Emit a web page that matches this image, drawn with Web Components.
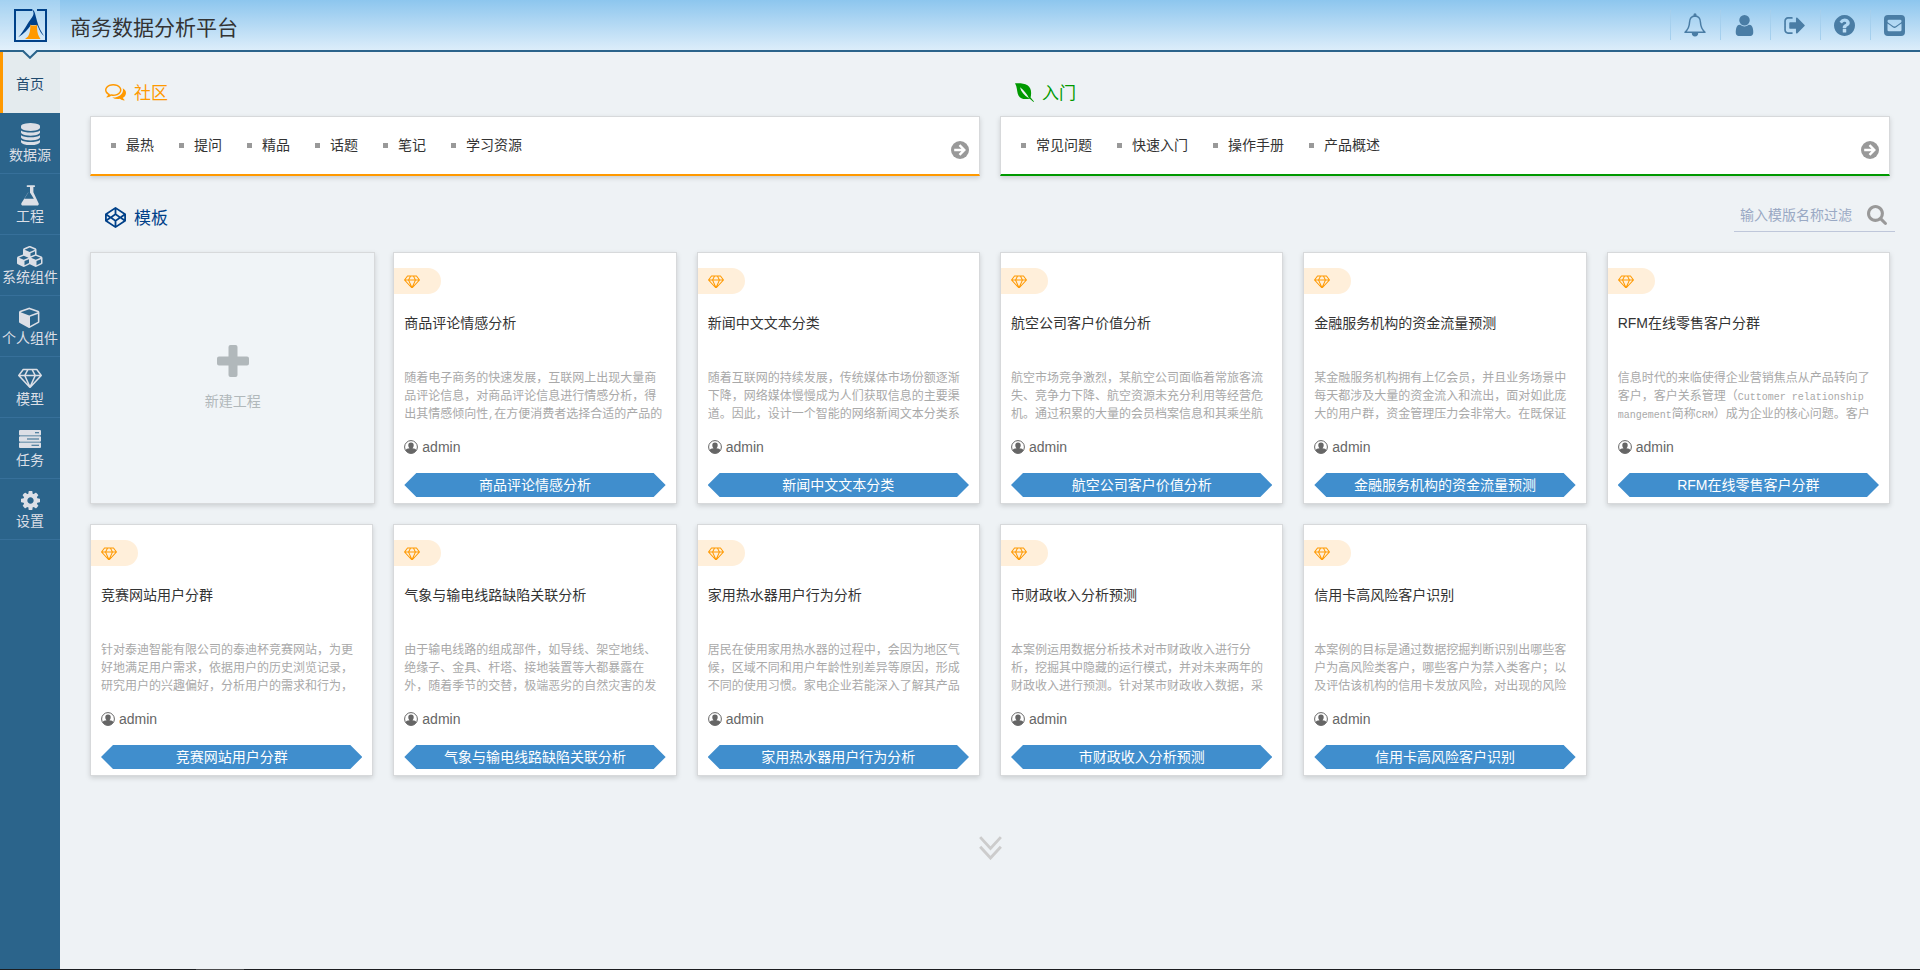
<!DOCTYPE html>
<html lang="zh-CN">
<head>
<meta charset="utf-8">
<title>商务数据分析平台</title>
<style>
  body {
    margin: 0;
    background: #eef2f5;
    color: #333;
    font: 14px/20px "Liberation Sans", "Noto Sans CJK SC", sans-serif;
  }
</style>
</head>
<body>
<app-shell>
  <app-header slot="header" heading="商务数据分析平台">
    <header-action icon="bell" label="消息"></header-action>
    <header-action icon="user" label="用户"></header-action>
    <header-action icon="signout" label="退出"></header-action>
    <header-action icon="question" label="帮助"></header-action>
    <header-action icon="envelope" label="反馈"></header-action>
  </app-header>

  <nav-item slot="nav" active>首页</nav-item>
  <nav-item slot="nav" icon="database">数据源</nav-item>
  <nav-item slot="nav" icon="flask">工程</nav-item>
  <nav-item slot="nav" icon="cubes">系统组件</nav-item>
  <nav-item slot="nav" icon="cube">个人组件</nav-item>
  <nav-item slot="nav" icon="diamond">模型</nav-item>
  <nav-item slot="nav" icon="tasks">任务</nav-item>
  <nav-item slot="nav" icon="cog">设置</nav-item>

  <link-panel slot="panels" icon="comments" heading="社区" style="--accent: #f90"
    links="最热,提问,精品,话题,笔记,学习资源"></link-panel>
  <link-panel slot="panels" icon="leaf" heading="入门" style="--accent: #090"
    links="常见问题,快速入门,操作手册,产品概述"></link-panel>

  <search-box slot="search" placeholder="输入模版名称过滤"></search-box>

  <new-card>新建工程</new-card>
  <template-card heading="商品评论情感分析" author="admin">随着电子商务的快速发展，互联网上出现大量商<br>品评论信息，对商品评论信息进行情感分析，得<br>出其情感倾向性<small>,</small>在方便消费者选择合适的产品的</template-card>
  <template-card heading="新闻中文文本分类" author="admin">随着互联网的持续发展，传统媒体市场份额逐渐<br>下降，网络媒体慢慢成为人们获取信息的主要渠<br>道。因此，设计一个智能的网络新闻文本分类系</template-card>
  <template-card heading="航空公司客户价值分析" author="admin">航空市场竞争激烈，某航空公司面临着常旅客流<br>失、竞争力下降、航空资源未充分利用等经营危<br>机。通过积累的大量的会员档案信息和其乘坐航</template-card>
  <template-card heading="金融服务机构的资金流量预测" author="admin">某金融服务机构拥有上亿会员，并且业务场景中<br>每天都涉及大量的资金流入和流出，面对如此庞<br>大的用户群，资金管理压力会非常大。在既保证</template-card>
  <template-card heading="RFM在线零售客户分群" author="admin">信息时代的来临使得企业营销焦点从产品转向了<br>客户，客户关系管理（<small>Cuttomer relationship</small><br><small>mangement</small>简称<small>CRM</small>）成为企业的核心问题。客户</template-card>
  <template-card heading="竞赛网站用户分群" author="admin">针对泰迪智能有限公司的泰迪杯竞赛网站，为更<br>好地满足用户需求，依据用户的历史浏览记录，<br>研究用户的兴趣偏好，分析用户的需求和行为，</template-card>
  <template-card heading="气象与输电线路缺陷关联分析" author="admin">由于输电线路的组成部件，如导线、架空地线、<br>绝缘子、金具、杆塔、接地装置等大都暴露在<br>外，随着季节的交替，极端恶劣的自然灾害的发</template-card>
  <template-card heading="家用热水器用户行为分析" author="admin">居民在使用家用热水器的过程中，会因为地区气<br>候，区域不同和用户年龄性别差异等原因，形成<br>不同的使用习惯。家电企业若能深入了解其产品</template-card>
  <template-card heading="市财政收入分析预测" author="admin">本案例运用数据分析技术对市财政收入进行分<br>析，挖掘其中隐藏的运行模式，并对未来两年的<br>财政收入进行预测。针对某市财政收入数据，采</template-card>
  <template-card heading="信用卡高风险客户识别" author="admin">本案例的目标是通过数据挖掘判断识别出哪些客<br>户为高风险类客户，哪些客户为禁入类客户；以<br>及评估该机构的信用卡发放风险，对出现的风险</template-card>
</app-shell>

<script>
// name: [viewBox, markup]
const icons = {
  bell: ['0 0 24 24', '<path fill="none" stroke="currentColor" stroke-width="1.500" stroke-linejoin="round" d="M12 3c-3.600.2-5.400 3-5.500 6.500C6.400 14 5 16.500 2 19.200h20c-3-2.700-4.400-5.200-4.500-9.700C17.400 6 15.600 3.200 12 3z"/><path d="M12 .2a1.500 1.500 0 0 1 1.500 1.600v1.700h-3V1.800A1.500 1.500 0 0 1 12 .2zM8.800 20h6.400a3.200 3.400 0 0 1-6.400 0z"/>'],
  user: ['128 128 1536 1536', '<path d="M1536 1399q0 109-62.500 187t-150.500 78h-854q-88 0-150.500-78t-62.500-187q0-85 8.500-160.500t31.500-152 58.500-131 94-89 134.500-34.500q131 128 313 128t313-128q76 0 134.500 34.500t94 89 58.500 131 31.500 152 8.500 160.500zm-256-887q0 159-112.500 271.500t-271.500 112.500-271.500-112.500-112.500-271.500 112.500-271.500 271.500-112.500 271.500 112.500 112.500 271.500z"/>'],
  signout: ['48 96 1600 1600', '<path d="M704 1440q0 4 1 20t.5 26.500-3 23.500-10 19.500-20.500 6.500h-320q-119 0-203.500-84.500t-84.500-203.500v-704q0-119 84.500-203.500t203.500-84.500h320q13 0 22.500 9.500t9.500 22.500q0 4 1 20t.5 26.500-3 23.500-10 19.500-20.500 6.500h-320q-66 0-113 47t-47 113v704q0 66 47 113t113 47h312l11.500 1 11.500 3 8 5.500 7 9 2 13.500zm928-544q0 26-19 45l-544 544q-19 19-45 19t-45-19-19-45v-288h-448q-26 0-45-19t-19-45v-384q0-26 19-45t45-19h448v-288q0-26 19-45t45-19 45 19l544 544q19 19 19 45z"/>'],
  question: ['128 128 1536 1536', '<path d="M1024 1376v-192q0-14-9-23t-23-9h-192q-14 0-23 9t-9 23v192q0 14 9 23t23 9h192q14 0 23-9t9-23zm256-672q0-88-55.500-163t-138.500-116-170-41q-243 0-371 213-15 24 8 42l132 100q7 6 19 6 16 0 25-12 53-68 86-92 34-24 86-24 48 0 85.500 26t37.500 59q0 38-20 61t-68 45q-63 28-115.500 86.500t-52.500 125.500v36q0 14 9 23t23 9h192q14 0 23-9t9-23q0-19 21.500-49.500t54.500-49.500q32-18 49-28.500t46-35 44.500-48 28-60.500 12.500-81zm384 192q0 209-103 385.500t-279.500 279.500-385.500 103-385.500-103-279.500-279.500-103-385.500 103-385.500 279.500-279.500 385.500-103 385.500 103 279.500 279.500 103 385.500z"/>'],
  envelope: ['0 0 24 24', '<path fill-rule="evenodd" d="M4.500 0h15A4.500 4.500 0 0 1 24 4.500v15a4.500 4.500 0 0 1-4.500 4.500h-15A4.500 4.500 0 0 1 0 19.500v-15A4.500 4.500 0 0 1 4.500 0zM4 9.700V17a1.500 1.500 0 0 0 1.500 1.500h13A1.500 1.500 0 0 0 20 17V9.700c-2 1.500-4 2.700-6 4.200-1.600 1.100-2.400 1.100-4 0-2-1.500-4-2.700-6-4.200zM5.500 5.500A1.500 1.500 0 0 0 4 7c0 .9.700 1.600 1.400 2.100l5.300 3.700c1 .6 1.600.6 2.600 0l5.300-3.700C19.300 8.600 20 7.900 20 7a1.500 1.500 0 0 0-1.500-1.500z"/>'],
  database: ['128 0 1536 1792', '<path d="M896 768q237 0 443-43t325-127v170q0 69-103 128t-280 93.500-385 34.500-385-34.500-280-93.500-103-128v-170q119 84 325 127t443 43zm0 768q237 0 443-43t325-127v170q0 69-103 128t-280 93.500-385 34.500-385-34.500-280-93.500-103-128v-170q119 84 325 127t443 43zm0-384q237 0 443-43t325-127v170q0 69-103 128t-280 93.500-385 34.500-385-34.500-280-93.500-103-128v-170q119 84 325 127t443 43zm0-1152q208 0 385 34.500t280 93.500 103 128v128q0 69-103 128t-280 93.500-385 34.500-385-34.500-280-93.500-103-128v-128q0-69 103-128t280-93.500 385-34.500z"/>'],
  flask: ['64 32 1664 1728', '<path d="M1527 1447q56 89 21.500 153t-140.500 64h-1024q-106 0-140.500-64t21.500-153l503-793v-399h-64q-26 0-45-19t-19-45 19-45 45-19h512q26 0 45 19t19 45-19 45-45 19h-64v399zm-779-725l-272 430h712l-272-430-20-31v-436h-128v436z"/>'],
  cubes: ['0 0 2304 1792', '<path d="M640 1632l384-192v-314l-384 164v342zm-64-454l404-173-404-173-404 173zm1088 454l384-192v-314l-384 164v342zm-64-454l404-173-404-173-404 173zm-448-293l384-165v-266l-384 164v267zm-64-379l441-189-441-189-441 189zm1088 518v416q0 36-19 67t-52 47l-448 224q-25 14-57 14t-57-14l-448-224q-4-2-7-4-2 2-7 4l-448 224q-25 14-57 14t-57-14l-448-224q-33-16-52-47t-19-67v-416q0-38 21.500-70t56.500-48l434-186v-400q0-38 21.500-70t56.500-48l448-192q23-10 50-10t50 10l448 192q35 16 56.500 48t21.500 70v400l434 186q36 16 57 48t21 70z"/>'],
  cube: ['0 0 1792 1792', '<path d="M896 1629l640-349v-636l-640 233v752zm-64-865l698-254-698-254-698 254zm832-252v768q0 35-18 65t-49 47l-704 384q-28 16-61 16t-61-16l-704-384q-31-17-49-47t-18-65v-768q0-40 23-73t61-47l704-256q22-8 44-8t44 8l704 256q38 14 61 47t23 73z"/>'],
  diamond: ['0 64 2048 1664', '<path d="M212 768l623 665-300-665h-323zm812 772l349-772h-698zm-486-900l204-384h-262l-288 384h346zm675 793l623-665h-323zm-530-793h682l-204-384h-274zm827 0h346l-288-384h-262zm141-486l384 512q14 18 13 41.500t-17 40.500l-960 1024q-18 20-47 20t-47-20l-960-1024q-16-17-17-40.500t13-41.500l384-512q18-26 51-26h1152q33 0 51 26z"/>'],
  tasks: ['0 0 22 18', '<path fill-rule="evenodd" d="M.7 0h20.600l.7.7v4l-.7.700H.7L0 4.700v-4zM16 2.200v1h4v-1zM.7 6.300h20.600l.7.700v4l-.7.700H.7L0 11V7zM8 8.500v1h12v-1zM.7 12.600h20.600l.7.700v4l-.7.700H.7l-.7-.7v-4zM12.500 14.800v1H20v-1z"/>'],
  cog: ['128 128 1536 1536', '<path d="M1152 896q0-106-75-181t-181-75-181 75-75 181 75 181 181 75 181-75 75-181zm512-109v222q0 12-8 23t-20 13l-185 28q-19 54-39 91 35 50 107 138 10 12 10 25t-9 23q-27 37-99 108t-94 71q-12 0-26-9l-138-108q-44 23-91 38-16 136-29 186-7 28-36 28h-222q-14 0-24.500-8.500t-11.500-21.500l-28-184q-49-16-90-37l-141 107q-10 9-25 9-14 0-25-11-126-114-165-168-7-10-7-23 0-12 8-23 15-21 51-66.500t54-70.500q-27-50-41-99l-183-27q-13-2-21-12.500t-8-23.500v-222q0-12 8-23t19-13l186-28q14-46 39-92-40-57-107-138-10-12-10-24 0-10 9-23 26-36 98.500-107.500t94.500-71.500q13 0 26 10l138 107q44-23 91-38 16-136 29-186 7-28 36-28h222q14 0 24.500 8.500t11.500 21.500l28 184q49 16 90 37l142-107q9-9 24-9 13 0 25 10 129 119 165 170 7 8 7 22 0 12-8 23-15 21-51 66.500t-54 70.500q26 50 41 98l183 28q13 2 21 12.500t8 23.500z"/>'],
  comments: ['0 256 1792 1408', '<path d="M704 384q-153 0-286 52t-211.500 141-78.500 191q0 82 53 158t149 132l97 56-35 84q34-20 62-39l44-31 53 10q78 14 153 14 153 0 286-52t211.500-141 78.500-191-78.500-191-211.500-141-286-52zm0-128q191 0 353.500 68.500t256.500 186.500 94 257-94 257-256.500 186.500-353.500 68.500q-86 0-176-16-124 88-278 128-36 9-86 16h-3q-11 0-20.500-8t-11.500-21q-1-3-1-6.500t.5-6.500 2-6l2.500-5 3.500-5.500 4-5 4.500-5 4-4.500q5-6 23-25t26-29.500 22.500-29 25-38.500 20.500-44q-124-72-195-177t-71-224q0-139 94-257t256.500-186.500 353.500-68.500zm822 1169q10 24 20.500 44t25 38.500 22.500 29 26 29.500 23 25q1 1 4 4.500t4.500 5 4 5 3.500 5.500l2.500 5 2 6 .5 6.500-1 6.500q-3 14-13 22t-22 7q-50-7-86-16-154-40-278-128-90 16-176 16-271 0-472-132 58 4 88 4 161 0 309-45t264-129q125-92 192-212t67-254q0-77-23-152 129 71 204 178t75 230q0 120-71 224.500t-195 176.500z"/>'],
  leaf: ['0 0 19 19', '<path fill-rule="evenodd" d="M0 .3C4 .1 9 0 12.500 2.300c3.500 2.400 4.300 6.600 3.100 12.200L19 18.600l-.5.400-3.700-3.300c-5.300.9-9.300.5-11.200-2.900C1.700 9.500 2.500 4.500 0 .3zm5 3.900c1 4.300 4 8.300 9 11-2.200-4.600-5.200-8-9-11z"/>'],
  codepen: ['0 0 1792 1792', '<path d="M216 1169l603 402v-359l-334-223zm-62-144l193-129-193-129v258zm819 546l603-402-269-180-334 223v359zm-77-493l272-182-272-182-272 182zm-411-275l334-223v-359l-603 402zm960 93l193 129v-258zm-138-93l269-180-603-402v359zm485-180v546q0 41-34 64l-819 546q-21 13-43 13t-43-13l-819-546q-34-23-34-64v-546q0-41 34-64l819-546q21-13 43-13t43 13l819 546q34 23 34 64z"/>'],
  arrow: ['0 0 18 18', '<circle cx="9" cy="9" r="9"/><path fill="none" stroke="#fff" stroke-width="2.400" d="M3.200 9h9.300M8.500 4.200L13.300 9l-4.800 4.800"/>'],
  search: ['64 128 1664 1664', '<path d="M1216 832q0-185-131.500-316.500t-316.500-131.500-316.500 131.500-131.500 316.500 131.500 316.500 316.500 131.500 316.500-131.500 131.500-316.500zm512 832q0 52-38 90t-90 38q-54 0-90-38l-343-342q-179 124-399 124-143 0-273.500-55.500t-225-150-150-225-55.500-273.500 55.500-273.500 150-225 225-150 273.500-55.500 273.500 55.500 225 150 150 225 55.500 273.500q0 220-124 399l343 343q37 37 37 90z"/>'],
  plus: ['0 0 32 32', '<path d="M13.500 0h5a2 2 0 0 1 2 2v9.500H30a2 2 0 0 1 2 2v5a2 2 0 0 1-2 2h-9.500V30a2 2 0 0 1-2 2h-5a2 2 0 0 1-2-2v-9.500H2a2 2 0 0 1-2-2v-5a2 2 0 0 1 2-2h9.500V2a2 2 0 0 1 2-2z"/>'],
  person: ['0 0 14 14', '<circle cx="7" cy="7" r="6.400" fill="none" stroke="currentColor"/><path d="M7 2.600a2.700 2.700 0 0 1 2.700 2.800c0 1.200-.5 2.200-1.300 2.800 2 .2 3.600.8 4.200 1.800A6.500 6.500 0 0 1 7 13.500 6.500 6.500 0 0 1 1.400 10c.6-1 2.200-1.600 4.200-1.800-.8-.6-1.300-1.600-1.300-2.800A2.700 2.700 0 0 1 7 2.600z"/>'],
  more: ['0 0 24 25', '<path fill="none" stroke="currentColor" stroke-width="3" d="M1.200 1.200L12 13 22.800 1.200M1.200 11.200L12 23l10.800-11.800"/>'],
};

class BaseElement extends HTMLElement {
  constructor() {
    super();
    this.attachShadow({ mode: 'open' });
  }

  connectedCallback() {
    this.shadowRoot.innerHTML = this.render();
  }

  attr(name) {
    return this.getAttribute(name) || '';
  }
}

// Sized by the --size (width) property, height follows the viewBox
class AppIcon extends BaseElement {
  render() {
    const [viewBox, markup] = icons[this.attr('name')];
    return `
      <style>
        :host { display: inline-flex; flex: none; width: var(--size, 20px); }
        svg { display: block; width: 100%; fill: currentColor; }
      </style>
      <svg viewBox="${viewBox}" aria-hidden="true">${markup}</svg>`;
  }
}

class AppShell extends BaseElement {
  render() {
    return `
      <style>
        :host {
          display: grid;
          grid-template: auto 1fr auto / 60px 1fr;
          min-height: 100vh;
        }
        header, footer { grid-column: 1 / -1; }
        nav { background: #2b648b; }
        main { padding: 0 30px 20px; }
        .panels {
          display: grid;
          grid-template-columns: 1fr 1fr;
          gap: 20px;
        }
        .bar {
          display: flex;
          align-items: center;
          box-sizing: border-box;
          height: 76px;
          margin-right: -5px;
          padding: 10px 0 0 15px;
        }
        h2 {
          display: flex;
          align-items: center;
          gap: 8px;
          flex: 1;
          margin: 0;
          color: #004189;
          font-size: 17px;
          font-weight: normal;
        }
        app-icon { --size: 21px; }
        h2 app-icon { margin-bottom: 3px; }
        .cards {
          display: grid;
          grid-template-columns: repeat(6, minmax(0, 1fr));
          gap: 20px;
        }
        .more {
          display: block;
          margin: 60px auto 0;
          padding: 0;
          border: 0;
          background: none;
          color: #ccc;
          cursor: pointer;
        }
        .more app-icon { --size: 23px; }
        footer {
          height: 1px;
          background: linear-gradient(90deg, #1b1d20 196px, #4a4b4d 196px 244px, #1b1d20 244px);
        }
      </style>
      <header><slot name="header"></slot></header>
      <nav><slot name="nav"></slot></nav>
      <main>
        <div class="panels"><slot name="panels"></slot></div>
        <div class="bar">
          <h2><app-icon name="codepen"></app-icon>模板</h2>
          <slot name="search"></slot>
        </div>
        <div class="cards"><slot></slot></div>
        <button class="more" aria-label="更多"><app-icon name="more"></app-icon></button>
      </main>
      <footer></footer>`;
  }
}

class AppHeader extends BaseElement {
  render() {
    return `
      <style>
        :host {
          display: flex;
          align-items: center;
          height: 50px;
          border-bottom: 2px solid #2b648b;
          background: linear-gradient(#8dc6ee, #dcedfa);
        }
        .logo {
          position: relative;
          display: flex;
          align-items: center;
          justify-content: center;
          width: 60px;
          height: 50px;
          background: rgba(255, 255, 255, .2);
        }
        .notch { position: absolute; left: 22px; top: 50px; }
        h1 {
          flex: 1;
          margin: 0 0 0 10px;
          padding-top: 6px;
          font-size: 21px;
          line-height: 30px;
          font-weight: normal;
        }
      </style>
      <a class="logo" href="#" aria-label="首页">
        <svg width="33" height="33" viewBox="0 0 33 33">
          <path fill="none" stroke="#004189" stroke-width="2" d="M18 1H1v31h31V1h-9"/>
          <path fill="#004189" d="M17.500 0c2 1 3 2.200 3.500 4.500L23 12c1.500 6 4 10.500 7 15-2.600-2-4.500-5.500-6.500-10.500l-1.500-.5h-5c-3 4.500-7 8.500-12.800 12.300C10 22 13 15 16.500 10.500c1.500-2.200 2.500-3.500 3-5.500.2-2-.8-3.500-2-5z"/>
          <path fill="#f90" d="M16.300 15.500l1.400 1h4l1.400-1c-.2 5.500.3 9 1.900 12l1.500 2.500H11l3-2.500c1.800-3 2.500-6.500 2.300-12z"/>
        </svg>
        <svg class="notch" width="16" height="9" viewBox="0 0 16 9">
          <path fill="#dcedfa" d="M1 0h14L8 7.500z"/>
          <path fill="none" stroke="#2b648b" stroke-width="2" d="M.5.500L8 7.800 15.500.5"/>
        </svg>
      </a>
      <h1>${this.attr('heading')}</h1>
      <slot></slot>`;
  }
}

class HeaderAction extends BaseElement {
  render() {
    return `
      <style>
        :host { display: block; }
        button {
          display: flex;
          align-items: center;
          justify-content: center;
          box-sizing: border-box;
          width: 50px;
          height: 30px;
          padding: 0 2px 0 0;
          border: 0;
          border-left: 1px solid #a5cfed;
          background: none;
          color: #4a7da5;
          cursor: pointer;
        }
        app-icon { --size: 21px; }
        app-icon[name="bell"] { --size: 24px; }
      </style>
      <button aria-label="${this.attr('label')}"><app-icon name="${this.attr('icon')}"></app-icon></button>`;
  }
}

class NavItem extends BaseElement {
  render() {
    const icon = this.attr('icon');
    return `
      <style>
        :host { display: block; }
        a {
          display: flex;
          flex-direction: column;
          align-items: center;
          justify-content: center;
          box-sizing: border-box;
          height: 61px;
          padding-top: 2px;
          border-bottom: 1px solid #37709a;
          color: #dcdfe6;
          text-decoration: none;
          white-space: nowrap;
        }
        .icon { display: flex; align-items: center; height: 21px; }
        .icon app-icon { --size: 19px; }
        .icon app-icon[name="cubes"] { --size: 27px; }
        .icon app-icon[name="diamond"] { --size: 24px; }
        .icon app-icon[name="flask"],
        .icon app-icon[name="tasks"],
        .icon app-icon[name="cube"] { --size: 22px; }
        :host([active]) a {
          padding: 3px 3px 0 0;
          border-left: 3px solid #f90;
          border-bottom: 0;
          background: #e4ebee;
          color: #1f4a6e;
        }
      </style>
      <a href="#">
        ${icon ? `<span class="icon"><app-icon name="${icon}"></app-icon></span>` : ''}
        <span><slot></slot></span>
      </a>`;
  }
}

class LinkPanel extends BaseElement {
  render() {
    const links = this.attr('links').split(',');
    return `
      <style>
        :host { display: block; }
        h2 {
          display: flex;
          align-items: center;
          gap: 8px;
          box-sizing: border-box;
          height: 64px;
          margin: 0;
          padding: 20px 0 0 15px;
          color: var(--accent);
          font-size: 17px;
          font-weight: normal;
        }
        h2 app-icon { --size: 21px; margin-bottom: 3px; }
        h2 app-icon[name="leaf"] { --size: 19px; }
        .box {
          display: flex;
          box-sizing: border-box;
          height: 60px;
          padding: 0 10px 0 20px;
          border: 1px solid #d7d9db;
          border-bottom: 2px solid var(--accent);
          background: #fff;
          box-shadow: 0 2px 5px rgba(0, 0, 0, .15);
        }
        ul {
          display: flex;
          gap: 25px;
          flex: 1;
          margin: 0;
          padding: 18px 0 0;
          list-style: none;
        }
        li { display: flex; align-items: center; gap: 10px; height: 20px; }
        li::before { content: ''; width: 5px; height: 5px; background: #999; }
        a { color: #333; text-decoration: none; }
        button {
          padding: 12px 0 0;
          border: 0;
          background: none;
          color: #999;
          cursor: pointer;
        }
        button app-icon { --size: 18px; }
      </style>
      <h2><app-icon name="${this.attr('icon')}"></app-icon>${this.attr('heading')}</h2>
      <div class="box">
        <ul>${links.map((link) => `<li><a href="#">${link}</a></li>`).join('')}</ul>
        <button aria-label="更多"><app-icon name="arrow"></app-icon></button>
      </div>`;
  }
}

class SearchBox extends BaseElement {
  render() {
    return `
      <style>
        :host { display: block; align-self: flex-start; margin-top: 12px; }
        label {
          display: flex;
          align-items: center;
          box-sizing: border-box;
          width: 161px;
          height: 34px;
          padding: 0 8px 0 6px;
          border-bottom: 1px solid #bfc7da;
          color: #999;
        }
        input {
          flex: 1;
          min-width: 0;
          padding: 0;
          border: 0;
          outline: 0;
          background: none;
          font: inherit;
        }
        input::placeholder { color: #9aa9c4; opacity: 1; }
        app-icon { --size: 20px; }
      </style>
      <label>
        <input type="text" aria-label="${this.attr('placeholder')}" placeholder="${this.attr('placeholder')}">
        <app-icon name="search"></app-icon>
      </label>`;
  }
}

class NewCard extends BaseElement {
  render() {
    return `
      <style>
        :host { display: flex; margin-right: -2px; }
        button {
          display: flex;
          flex-direction: column;
          align-items: center;
          justify-content: center;
          gap: 14px;
          flex: 1;
          border: 1px solid #d7d9db;
          background: #f0f4f7;
          box-shadow: 0 2px 5px rgba(0, 0, 0, .15);
          color: #b1b8bb;
          font: inherit;
          cursor: pointer;
        }
        app-icon { --size: 32px; }
      </style>
      <button><app-icon name="plus"></app-icon><span><slot></slot></span></button>`;
  }
}

class TemplateCard extends BaseElement {
  render() {
    const heading = this.attr('heading');
    return `
      <style>
        :host {
          display: block;
          padding: 15px 10px 6px;
          border: 1px solid #d7d9db;
          background: #fff;
          box-shadow: 0 2px 5px rgba(0, 0, 0, .15);
        }
        .tag {
          display: flex;
          align-items: center;
          box-sizing: border-box;
          width: 47px;
          height: 26px;
          margin-left: -10px;
          padding-left: 10px;
          border-radius: 0 13px 13px 0;
          background: #ffefda;
          color: #f90;
        }
        .tag app-icon { --size: 16px; }
        h3 {
          margin: 19px 0 36px;
          font-size: 14px;
          font-weight: normal;
        }
        p {
          height: 54px;
          margin: 0;
          overflow: hidden;
          color: #a9a9a9;
          font-size: 12px;
          line-height: 18px;
          white-space: nowrap;
        }
        ::slotted(small) {
          font: 10px/1 "Liberation Mono", monospace;
        }
        .author {
          display: flex;
          align-items: center;
          gap: 4px;
          margin: 14px 0 16px;
          color: #666;
        }
        .author app-icon { --size: 14px; }
        button {
          display: block;
          width: 100%;
          height: 24px;
          padding: 0;
          border: 0;
          background: #408ecd;
          clip-path: polygon(0 50%, 12px 0, calc(100% - 12px) 0, 100% 50%, calc(100% - 12px) 100%, 12px 100%);
          color: #fff;
          font: inherit;
          cursor: pointer;
        }
      </style>
      <div class="tag"><app-icon name="diamond"></app-icon></div>
      <h3>${heading}</h3>
      <p><slot></slot></p>
      <div class="author"><app-icon name="person"></app-icon>${this.attr('author')}</div>
      <button>${heading}</button>`;
  }
}

customElements.define('app-icon', AppIcon);
customElements.define('app-shell', AppShell);
customElements.define('app-header', AppHeader);
customElements.define('header-action', HeaderAction);
customElements.define('nav-item', NavItem);
customElements.define('link-panel', LinkPanel);
customElements.define('search-box', SearchBox);
customElements.define('new-card', NewCard);
customElements.define('template-card', TemplateCard);
</script>
</body>
</html>
